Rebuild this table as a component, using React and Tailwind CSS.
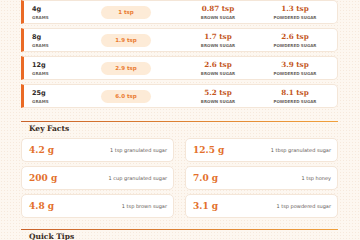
import React from "react";

const rows = [
  { g: "4g", tsp: "1 tsp", brown: "0.87 tsp", powder: "1.3 tsp" },
  { g: "8g", tsp: "1.9 tsp", brown: "1.7 tsp", powder: "2.6 tsp" },
  { g: "12g", tsp: "2.9 tsp", brown: "2.6 tsp", powder: "3.9 tsp" },
  { g: "25g", tsp: "6.0 tsp", brown: "5.2 tsp", powder: "8.1 tsp" },
];

const facts = [
  { v: "4.2 g", d: "1 tsp granulated sugar" },
  { v: "12.5 g", d: "1 tbsp granulated sugar" },
  { v: "200 g", d: "1 cup granulated sugar" },
  { v: "7.0 g", d: "1 tsp honey" },
  { v: "4.8 g", d: "1 tsp brown sugar" },
  { v: "3.1 g", d: "1 tsp powdered sugar" },
];

const sans = { fontFamily: '"DejaVu Sans", sans-serif' };
const serif = { fontFamily: '"DejaVu Serif", serif' };

export default function App() {
  return (
    <div
      className="w-[360px] h-[240px] overflow-hidden bg-[#fdf7f0] bg-[radial-gradient(#f6e9dc_0.6px,transparent_0.6px)] bg-[length:3px_3px] pl-[21px] pr-[22px]"
      style={sans}
    >
      <div className="flex flex-col gap-[4px]">
        {rows.map((r) => (
          <div
            key={r.g}
            className="h-[24px] flex items-center bg-white border border-[#f4e6d8] border-l-[3px] border-l-[#ea6a25] rounded-r-[5px] pl-[8px]"
          >
            <div className="w-[69px] flex flex-col">
              <span className="text-[6.5px] leading-[8px] font-bold text-[#2f2a26]">{r.g}</span>
              <span className="text-[4px] leading-[5px] mt-[2px] font-bold text-[#6b6560] tracking-[0.1px]">GRAMS</span>
            </div>
            <div className="w-[50px] h-[13px] rounded-full bg-[#fdebd7] flex items-center justify-center text-[5.5px] font-bold text-[#ea7a30]">
              {r.tsp}
            </div>
            <div className="w-[60px] ml-[37px] flex flex-col items-center">
              <span className="text-[7.2px] leading-[8px] font-bold text-[#c4561c]" style={serif}>{r.brown}</span>
              <span className="text-[4px] leading-[5px] mt-[2px] font-bold text-[#6b6560]">BROWN SUGAR</span>
            </div>
            <div className="w-[60px] ml-[17px] flex flex-col items-center">
              <span className="text-[7.2px] leading-[8px] font-bold text-[#c4561c]" style={serif}>{r.powder}</span>
              <span className="text-[4px] leading-[5px] mt-[2px] font-bold text-[#6b6560]">POWDERED SUGAR</span>
            </div>
          </div>
        ))}
      </div>

      <div className="mt-[13px] h-px bg-gradient-to-r from-[#c9622b] to-[#f0a03c]" />
      <div className="mt-[1px] pl-[8px] text-[7.5px] leading-[12px] font-bold text-[#3a2c22]" style={serif}>
        Key Facts
      </div>
      <div className="mt-[3px] grid grid-cols-2 gap-x-[11px] gap-y-[4px]">
        {facts.map((f) => (
          <div
            key={f.d}
            className="h-[24px] flex items-center justify-between bg-white border border-[#f4e6d8] rounded-[5px] pl-[7px] pr-[6px]"
          >
            <span className="text-[9px] leading-[10px] font-bold text-[#e3702b]" style={serif}>{f.v}</span>
            <span className="text-[5px] leading-[6px] text-[#5f5a55]">{f.d}</span>
          </div>
        ))}
      </div>

      <div className="mt-[11px] h-px bg-gradient-to-r from-[#c9622b] to-[#f0a03c]" />
      <div className="mt-[1px] pl-[8px] text-[7.5px] leading-[12px] font-bold text-[#3a2c22]" style={serif}>
        Quick Tips
      </div>
    </div>
  );
}
